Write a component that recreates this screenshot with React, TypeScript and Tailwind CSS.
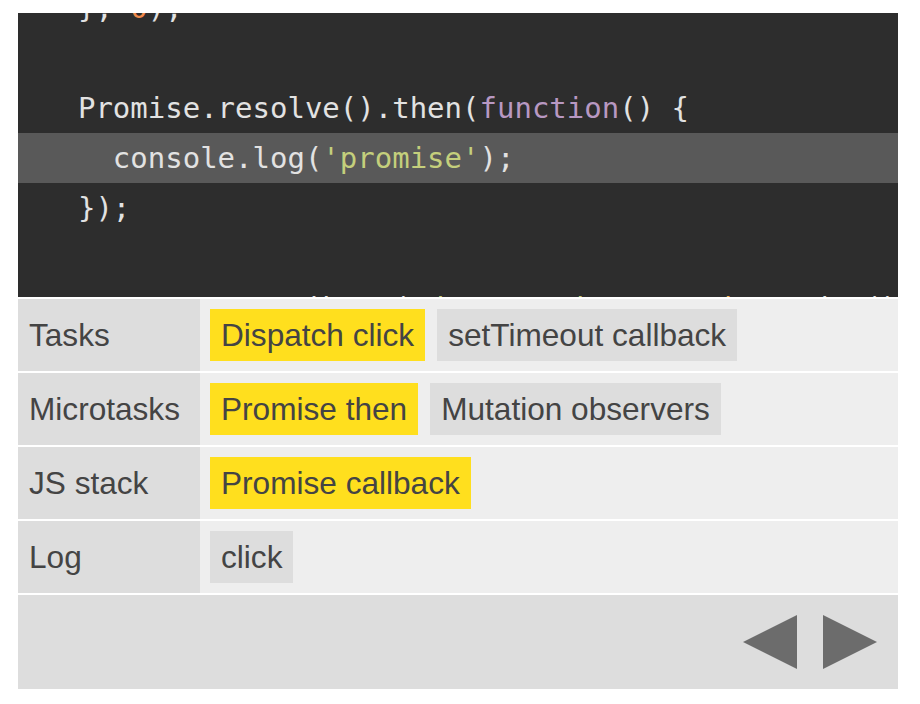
import React from "react";

type Tok = [string, string?];

const FG = "text-[#e2e2e2]";
const PURPLE = "text-[#b898c2]";
const GREEN = "text-[#c4cf7c]";
const ORANGE = "text-[#f08a4b]";
const GOLD = "text-[#f3b456]";

const lines: Tok[][] = [
  [["  }, "], ["0", ORANGE], [");"]],
  [],
  [["  Promise.resolve().then("], ["function", PURPLE], ["() {"]],
  [["    console.log("], ["'promise'", GREEN], [");"]],
  [["  });"]],
  [],
  [["  outer.setAttribute("], ["'data-random'", GREEN], [", "], ["Math", GOLD], [".random());"]],
];

const rows: { label: string; items: { text: string; hot?: boolean }[] }[] = [
  { label: "Tasks", items: [{ text: "Dispatch click", hot: true }, { text: "setTimeout callback" }] },
  { label: "Microtasks", items: [{ text: "Promise then", hot: true }, { text: "Mutation observers" }] },
  { label: "JS stack", items: [{ text: "Promise callback", hot: true }] },
  { label: "Log", items: [{ text: "click" }] },
];

export default function App() {
  return (
    <div className="min-h-screen bg-white pt-[13px] pl-[18px]">
      <div className="w-[880px] flex flex-col gap-[2px]">
        {/* code view, scrolled so the current line sits in the middle */}
        <div className="h-[284px] overflow-hidden bg-[#2d2d2d]">
          <pre
            className="-mt-[30px] pl-[25px] text-[29px] leading-[50px] text-[#e2e2e2]"
            style={{ fontFamily: '"DejaVu Sans Mono", monospace' }}
          >
            {lines.map((toks, i) => (
              <div key={i} className={`h-[50px] -ml-[25px] pl-[25px] ${i === 3 ? "bg-[#595959]" : ""}`}>
                {toks.map(([t, c], j) => (
                  <span key={j} className={c ?? FG}>
                    {t}
                  </span>
                ))}
              </div>
            ))}
          </pre>
        </div>

        {rows.map((r) => (
          <div
            key={r.label}
            className="flex text-[31.6px] leading-[36px] text-[#444]"
            style={{ fontFamily: '"Liberation Sans", Arial, sans-serif' }}
          >
            <div className="w-[182px] shrink-0 bg-[#dddddd] px-[11px] flex items-center">{r.label}</div>
            <div className="flex-1 bg-[#eeeeee] p-[10px] flex items-center gap-[12px]">
              {r.items.map((it) => (
                <span
                  key={it.text}
                  className={`px-[11px] py-[8px] ${it.hot ? "bg-[#ffdf1e]" : "bg-[#dddddd]"}`}
                >
                  {it.text}
                </span>
              ))}
            </div>
          </div>
        ))}

        <div className="bg-[#dddddd] p-[20px] pr-[21px] flex justify-end gap-[26px]">
          <svg width="54" height="54" viewBox="0 0 54 54">
            <polygon points="54,0 54,54 0,27" fill="#6c6c6c" />
          </svg>
          <svg width="54" height="54" viewBox="0 0 54 54">
            <polygon points="0,0 0,54 54,27" fill="#6c6c6c" />
          </svg>
        </div>
      </div>
    </div>
  );
}
